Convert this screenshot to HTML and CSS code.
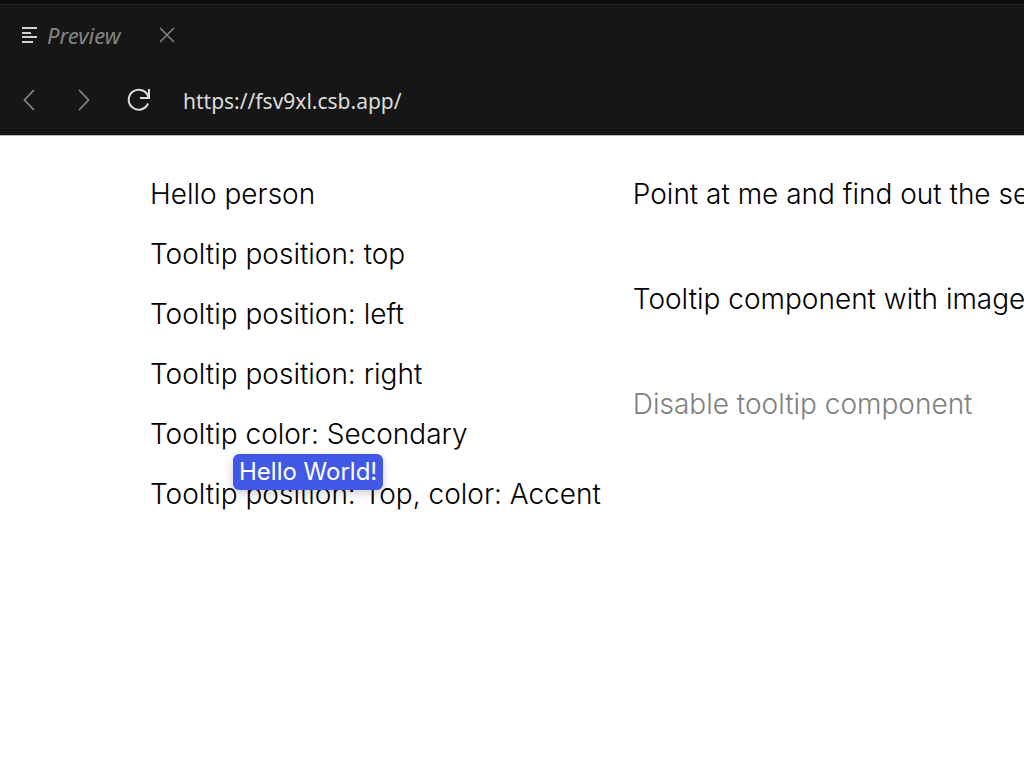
FILE: index.html
```
<!DOCTYPE html>
<html lang="en">
<head>
    <meta charset="UTF-8">
    <title>Preview</title>
    <link rel="stylesheet" href="styles.css">
</head>
<body>
<header class="browser">
    <div class="tab">
        <svg class="tab-icon" width="16" height="18" viewBox="0 0 16 18" fill="none" stroke="currentColor" stroke-width="2">
            <path d="M1 2h15M1 7h9M1 11h15M1 16h11"/>
        </svg>
        <span class="tab-title">Preview</span>
        <button class="icon-btn" type="button" aria-label="Close tab">
            <svg width="16" height="16" viewBox="0 0 16 16" fill="none" stroke="currentColor" stroke-width="1.5">
                <path d="M1 1l14 14M15 1L1 15"/>
            </svg>
        </button>
    </div>
    <div class="toolbar">
        <button class="icon-btn" type="button" aria-label="Back">
            <svg width="12" height="22" viewBox="0 0 12 22" fill="none" stroke="currentColor" stroke-width="1.8">
                <path d="M11 1L1.500 11L11 21"/>
            </svg>
        </button>
        <button class="icon-btn" type="button" aria-label="Forward">
            <svg width="12" height="22" viewBox="0 0 12 22" fill="none" stroke="currentColor" stroke-width="1.8">
                <path d="M1 1L10.500 11L1 21"/>
            </svg>
        </button>
        <button class="icon-btn reload" type="button" aria-label="Reload">
            <svg width="24" height="24" viewBox="0 0 24 24" fill="none" stroke="currentColor" stroke-width="2">
                <path d="M22 1V10H13M21.500 9.500A10 10 0 1 0 21 15.500"/>
            </svg>
        </button>
        <input class="address" type="text" value="https://fsv9xl.csb.app/" aria-label="Address">
    </div>
</header>
<main class="content">
    <div class="column">
        <p>Hello person</p>
        <p>Tooltip position: top</p>
        <p>Tooltip position: left</p>
        <p>Tooltip position: right</p>
        <p class="has-tooltip">Tooltip color: Secondary<span class="tooltip" role="tooltip">Hello World!</span></p>
        <p>Tooltip position: Top, color: Accent</p>
    </div>
    <div class="column column-wide">
        <p>Point at me and find out the secret</p>
        <p>Tooltip component with image</p>
        <p class="disabled">Disable tooltip component</p>
    </div>
</main>
</body>
</html>
```

FILE: styles.css
```
body {
    margin: 0;
    background: #fff;
    color: #000;
    font-family: Inter, sans-serif;
    overflow-x: hidden;
}

p {
    margin: 0;
}

/* browser bar */
.browser {
    padding-bottom: 2px;
    background: #161616;
    border-top: 4px solid #0c0c0c;
    border-bottom: 1px solid #bcbcbc;
    box-shadow: inset 0 1px #262626;
    color: #858585;
    font-family: "Noto Sans", sans-serif;
}

.tab {
    display: flex;
    align-items: center;
    height: 62px;
    padding-left: 21px;
}

.tab-icon {
    color: #d0d0d0;
}

.tab-title {
    margin: 0 38px 0 10px;
    font-size: 22px;
    font-style: italic;
}

.toolbar {
    display: flex;
    align-items: center;
    height: 67px;
    padding: 0 23px;
}

.icon-btn {
    display: flex;
    padding: 0;
    border: 0;
    background: none;
    color: inherit;
}

.toolbar .icon-btn + .icon-btn {
    margin-left: 43px;
}

.toolbar .reload {
    color: #dcdcdc;
}

.toolbar .icon-btn + .reload {
    margin-left: 37px;
}

.address {
    flex: 1;
    margin-left: 32px;
    padding: 2px 0 0;
    border: 0;
    background: none;
    color: #dcdcdc;
    font-family: "Noto Sans", sans-serif;
    font-size: 21px;
    outline: none;
}

/* page */
.content {
    display: flex;
    gap: 32px;
    padding: 42px 0 0 150px;
    font-size: 28px;
    font-weight: 300;
    line-height: 32px;
    white-space: nowrap;
}

.column {
    display: flex;
    flex-direction: column;
    gap: 28px;
}

.column-wide {
    gap: 73px;
}

.disabled {
    color: #808080;
}

.has-tooltip {
    position: relative;
}

.tooltip {
    position: absolute;
    top: 36px;
    left: 83px;
    padding: 2px 6px;
    border-radius: 6px;
    background: #4259e8;
    box-shadow: 0 3px 10px rgba(0, 0, 0, 0.2);
    color: #fff;
    font-size: 24px;
    font-weight: 400;
}
```
